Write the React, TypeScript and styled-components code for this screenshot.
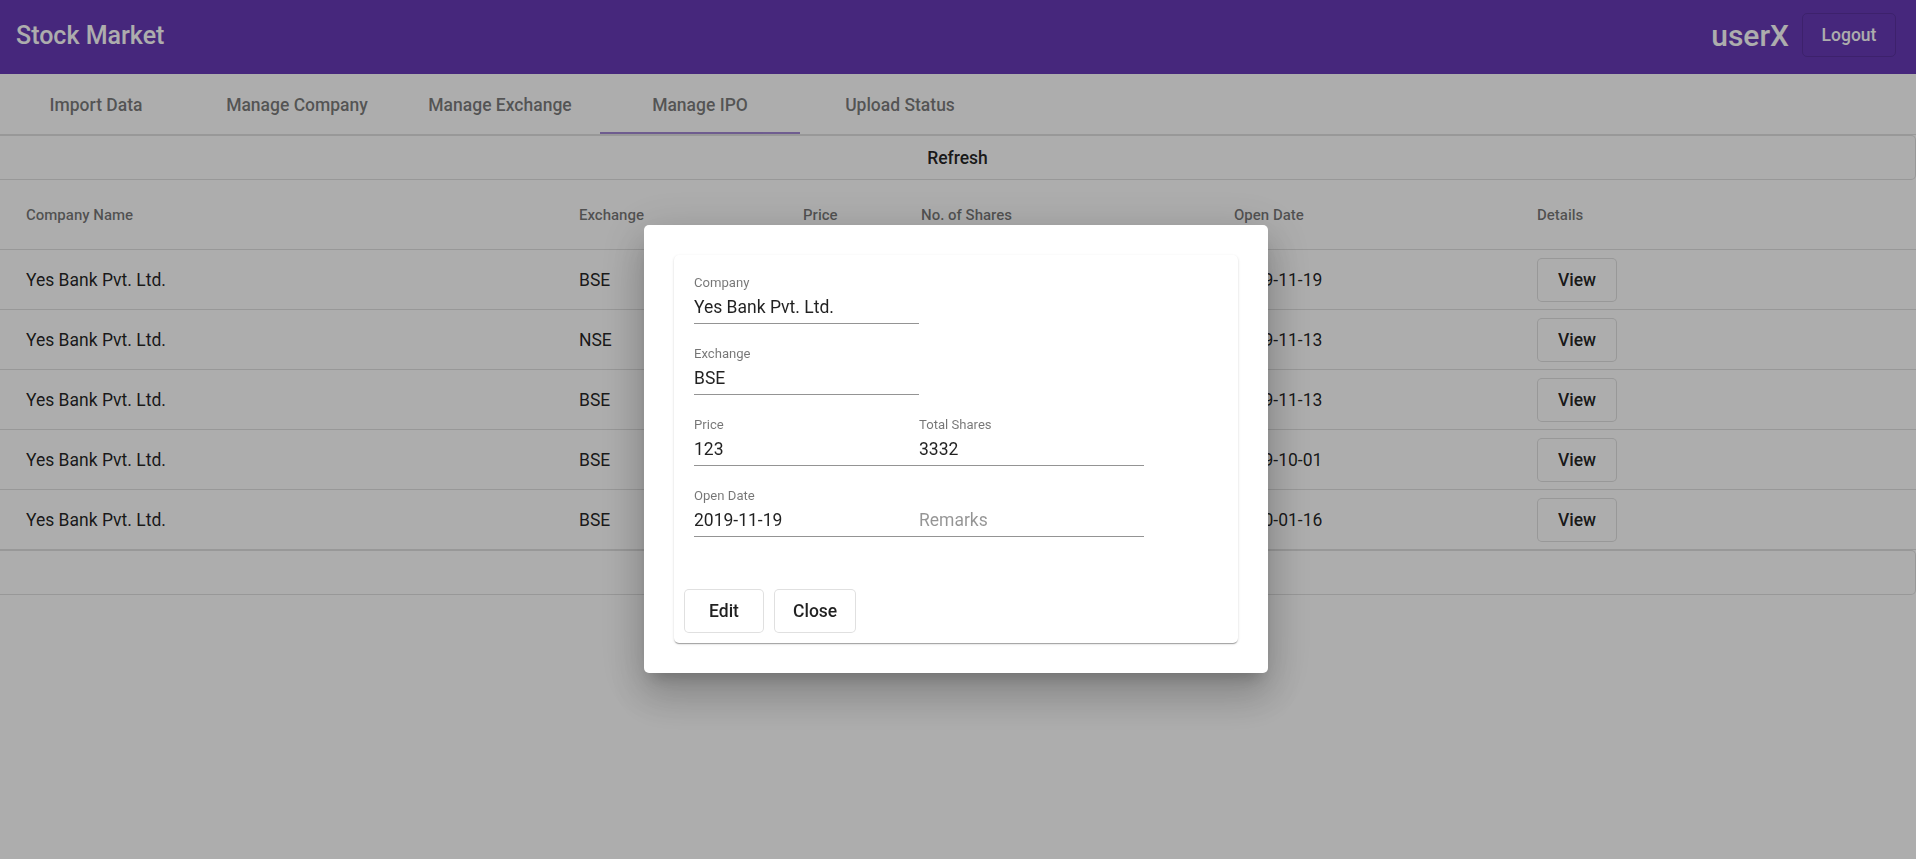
import React from "react";
import styled, { createGlobalStyle } from "styled-components";

const GlobalStyle = createGlobalStyle`
  html, body { margin: 0; padding: 0; background: #ffffff; }
  body { font-family: Roboto, "Liberation Sans", Arial, sans-serif; color: rgba(0,0,0,0.87); }
  * { box-sizing: border-box; }
`;

const Page = styled.div`
  width: 1916px;
  min-height: 859px;
  display: flex;
  flex-direction: column;
`;

const TopBar = styled.header`
  height: 74px;
  background: #673ab7;
  color: #ffffff;
  display: flex;
  align-items: center;
  padding: 0 20px 4px 16px;
`;

const Title = styled.div`
  font-size: 25px;
  font-weight: 500;
  flex: 1;
`;

const UserName = styled.div`
  font-size: 30px;
  font-weight: 500;
  margin-right: 13px;
`;

const OutlineButton = styled.button<{ $light?: boolean; $w?: number }>`
  font-family: Roboto, "Liberation Sans", Arial, sans-serif;
  font-size: 17.5px;
  font-weight: 500;
  height: 44px;
  min-width: ${(p) => p.$w ?? 80}px;
  padding: 0 18px;
  border: 1px solid rgba(0, 0, 0, 0.12);
  border-radius: 5px;
  background: ${(p) => (p.$light ? "transparent" : "#ffffff")};
  color: ${(p) => (p.$light ? "#ffffff" : "rgba(0,0,0,0.87)")};
  display: inline-flex;
  align-items: center;
  justify-content: center;
`;

const TabBar = styled.nav`
  display: flex;
  border-bottom: 1px solid rgba(0, 0, 0, 0.12);
`;

const Tab = styled.div<{ $active?: boolean; $shift?: number }>`
  position: relative;
  width: 200px;
  height: 60px;
  display: flex;
  align-items: center;
  justify-content: center;
  padding: 2px ${(p) => (p.$shift ?? 0) * 2}px 0 0;
  font-size: 17.5px;
  font-weight: 500;
  color: rgba(0, 0, 0, 0.87);
  opacity: 0.6;
  &::after {
    content: "";
    position: absolute;
    left: 0;
    right: 0;
    bottom: 0;
    height: 2px;
    background: ${(p) => (p.$active ? "#673ab7" : "transparent")};
  }
`;

const WideButton = styled.div`
  height: 45px;
  width: 1916px;
  border: 1px solid rgba(0, 0, 0, 0.12);
  border-left: none;
  border-radius: 0 5px 5px 0;
  display: flex;
  align-items: center;
  justify-content: center;
  font-size: 17.5px;
  font-weight: 500;
  color: rgba(0, 0, 0, 0.87);
`;

const cols = "553px 224px 118px 313px 303px 1fr";

const HeadRow = styled.div`
  display: grid;
  grid-template-columns: ${cols};
  height: 70px;
  align-items: center;
  border-bottom: 1px solid rgba(0, 0, 0, 0.12);
  padding-left: 26px;
`;

const HeadCell = styled.div`
  font-size: 15px;
  font-weight: 500;
  color: rgba(0, 0, 0, 0.54);
`;

const BodyRow = styled.div`
  display: grid;
  grid-template-columns: ${cols};
  height: 60px;
  align-items: center;
  border-bottom: 1px solid rgba(0, 0, 0, 0.12);
  padding-left: 26px;
`;

const Cell = styled.div`
  font-size: 17.5px;
  color: rgba(0, 0, 0, 0.87);
`;

const Overlay = styled.div`
  position: fixed;
  inset: 0;
  background: rgba(0, 0, 0, 0.32);
  display: flex;
  justify-content: center;
  align-items: flex-start;
  padding: 225px 4px 0 0;
`;

const Dialog = styled.div`
  width: 624px;
  background: #ffffff;
  border-radius: 5px;
  padding: 30px;
  box-shadow: 0 11px 15px -7px rgba(0, 0, 0, 0.2), 0 24px 38px 3px rgba(0, 0, 0, 0.14),
    0 9px 46px 8px rgba(0, 0, 0, 0.12);
`;

const Card = styled.div`
  background: #ffffff;
  border-radius: 5px;
  padding: 20px 20px 10px;
  box-shadow: 0 2px 1px -1px rgba(0, 0, 0, 0.2), 0 1px 1px 0 rgba(0, 0, 0, 0.14),
    0 1px 3px 0 rgba(0, 0, 0, 0.12);
`;

const FieldRow = styled.div`
  display: flex;
  margin-bottom: 22px;
`;

const Field = styled.div`
  width: 225px;
  display: flex;
  flex-direction: column;
  border-bottom: 1px solid rgba(0, 0, 0, 0.42);
  padding-bottom: 5px;
`;

const Label = styled.div`
  font-size: 13.1px;
  line-height: 16px;
  height: 16px;
  color: rgba(0, 0, 0, 0.54);
  margin-bottom: 5px;
`;

const Value = styled.div<{ $placeholder?: boolean }>`
  font-size: 17.5px;
  line-height: 22px;
  height: 22px;
  color: ${(p) => (p.$placeholder ? "rgba(0,0,0,0.42)" : "rgba(0,0,0,0.87)")};
`;

const Actions = styled.div`
  display: flex;
  gap: 10px;
  margin: 52px 0 0 -10px;
`;

const rows = [
  { company: "Yes Bank Pvt. Ltd.", exchange: "BSE", price: "123", shares: "3332", date: "2019-11-19" },
  { company: "Yes Bank Pvt. Ltd.", exchange: "NSE", price: "123", shares: "3332", date: "2019-11-13" },
  { company: "Yes Bank Pvt. Ltd.", exchange: "BSE", price: "123", shares: "3332", date: "2019-11-13" },
  { company: "Yes Bank Pvt. Ltd.", exchange: "BSE", price: "123", shares: "3332", date: "2019-10-01" },
  { company: "Yes Bank Pvt. Ltd.", exchange: "BSE", price: "123", shares: "3332", date: "2020-01-16" },
];

const tabs = [
  { label: "Import Data", shift: 4 },
  { label: "Manage Company", shift: 3 },
  { label: "Manage Exchange", shift: 0 },
  { label: "Manage IPO", shift: 0 },
  { label: "Upload Status", shift: 0 },
];

export default function App() {
  return (
    <>
      <GlobalStyle />
      <Page>
        <TopBar>
          <Title>Stock Market</Title>
          <UserName>userX</UserName>
          <OutlineButton $light $w={94}>Logout</OutlineButton>
        </TopBar>
        <TabBar>
          {tabs.map((t) => (
            <Tab key={t.label} $active={t.label === "Manage IPO"} $shift={t.shift}>
              {t.label}
            </Tab>
          ))}
        </TabBar>
        <WideButton>Refresh</WideButton>
        <HeadRow>
          <HeadCell>Company Name</HeadCell>
          <HeadCell>Exchange</HeadCell>
          <HeadCell>Price</HeadCell>
          <HeadCell>No. of Shares</HeadCell>
          <HeadCell>Open Date</HeadCell>
          <HeadCell>Details</HeadCell>
        </HeadRow>
        {rows.map((r, i) => (
          <BodyRow key={i}>
            <Cell>{r.company}</Cell>
            <Cell>{r.exchange}</Cell>
            <Cell>{r.price}</Cell>
            <Cell>{r.shares}</Cell>
            <Cell>{r.date}</Cell>
            <Cell>
              <OutlineButton>View</OutlineButton>
            </Cell>
          </BodyRow>
        ))}
        <WideButton />
      </Page>
      <Overlay>
        <Dialog>
          <Card>
            <FieldRow>
              <Field>
                <Label>Company</Label>
                <Value>Yes Bank Pvt. Ltd.</Value>
              </Field>
            </FieldRow>
            <FieldRow>
              <Field>
                <Label>Exchange</Label>
                <Value>BSE</Value>
              </Field>
            </FieldRow>
            <FieldRow>
              <Field>
                <Label>Price</Label>
                <Value>123</Value>
              </Field>
              <Field>
                <Label>Total Shares</Label>
                <Value>3332</Value>
              </Field>
            </FieldRow>
            <FieldRow>
              <Field>
                <Label>Open Date</Label>
                <Value>2019-11-19</Value>
              </Field>
              <Field>
                <Label />
                <Value $placeholder>Remarks</Value>
              </Field>
            </FieldRow>
            <Actions>
              <OutlineButton>Edit</OutlineButton>
              <OutlineButton>Close</OutlineButton>
            </Actions>
          </Card>
        </Dialog>
      </Overlay>
    </>
  );
}
